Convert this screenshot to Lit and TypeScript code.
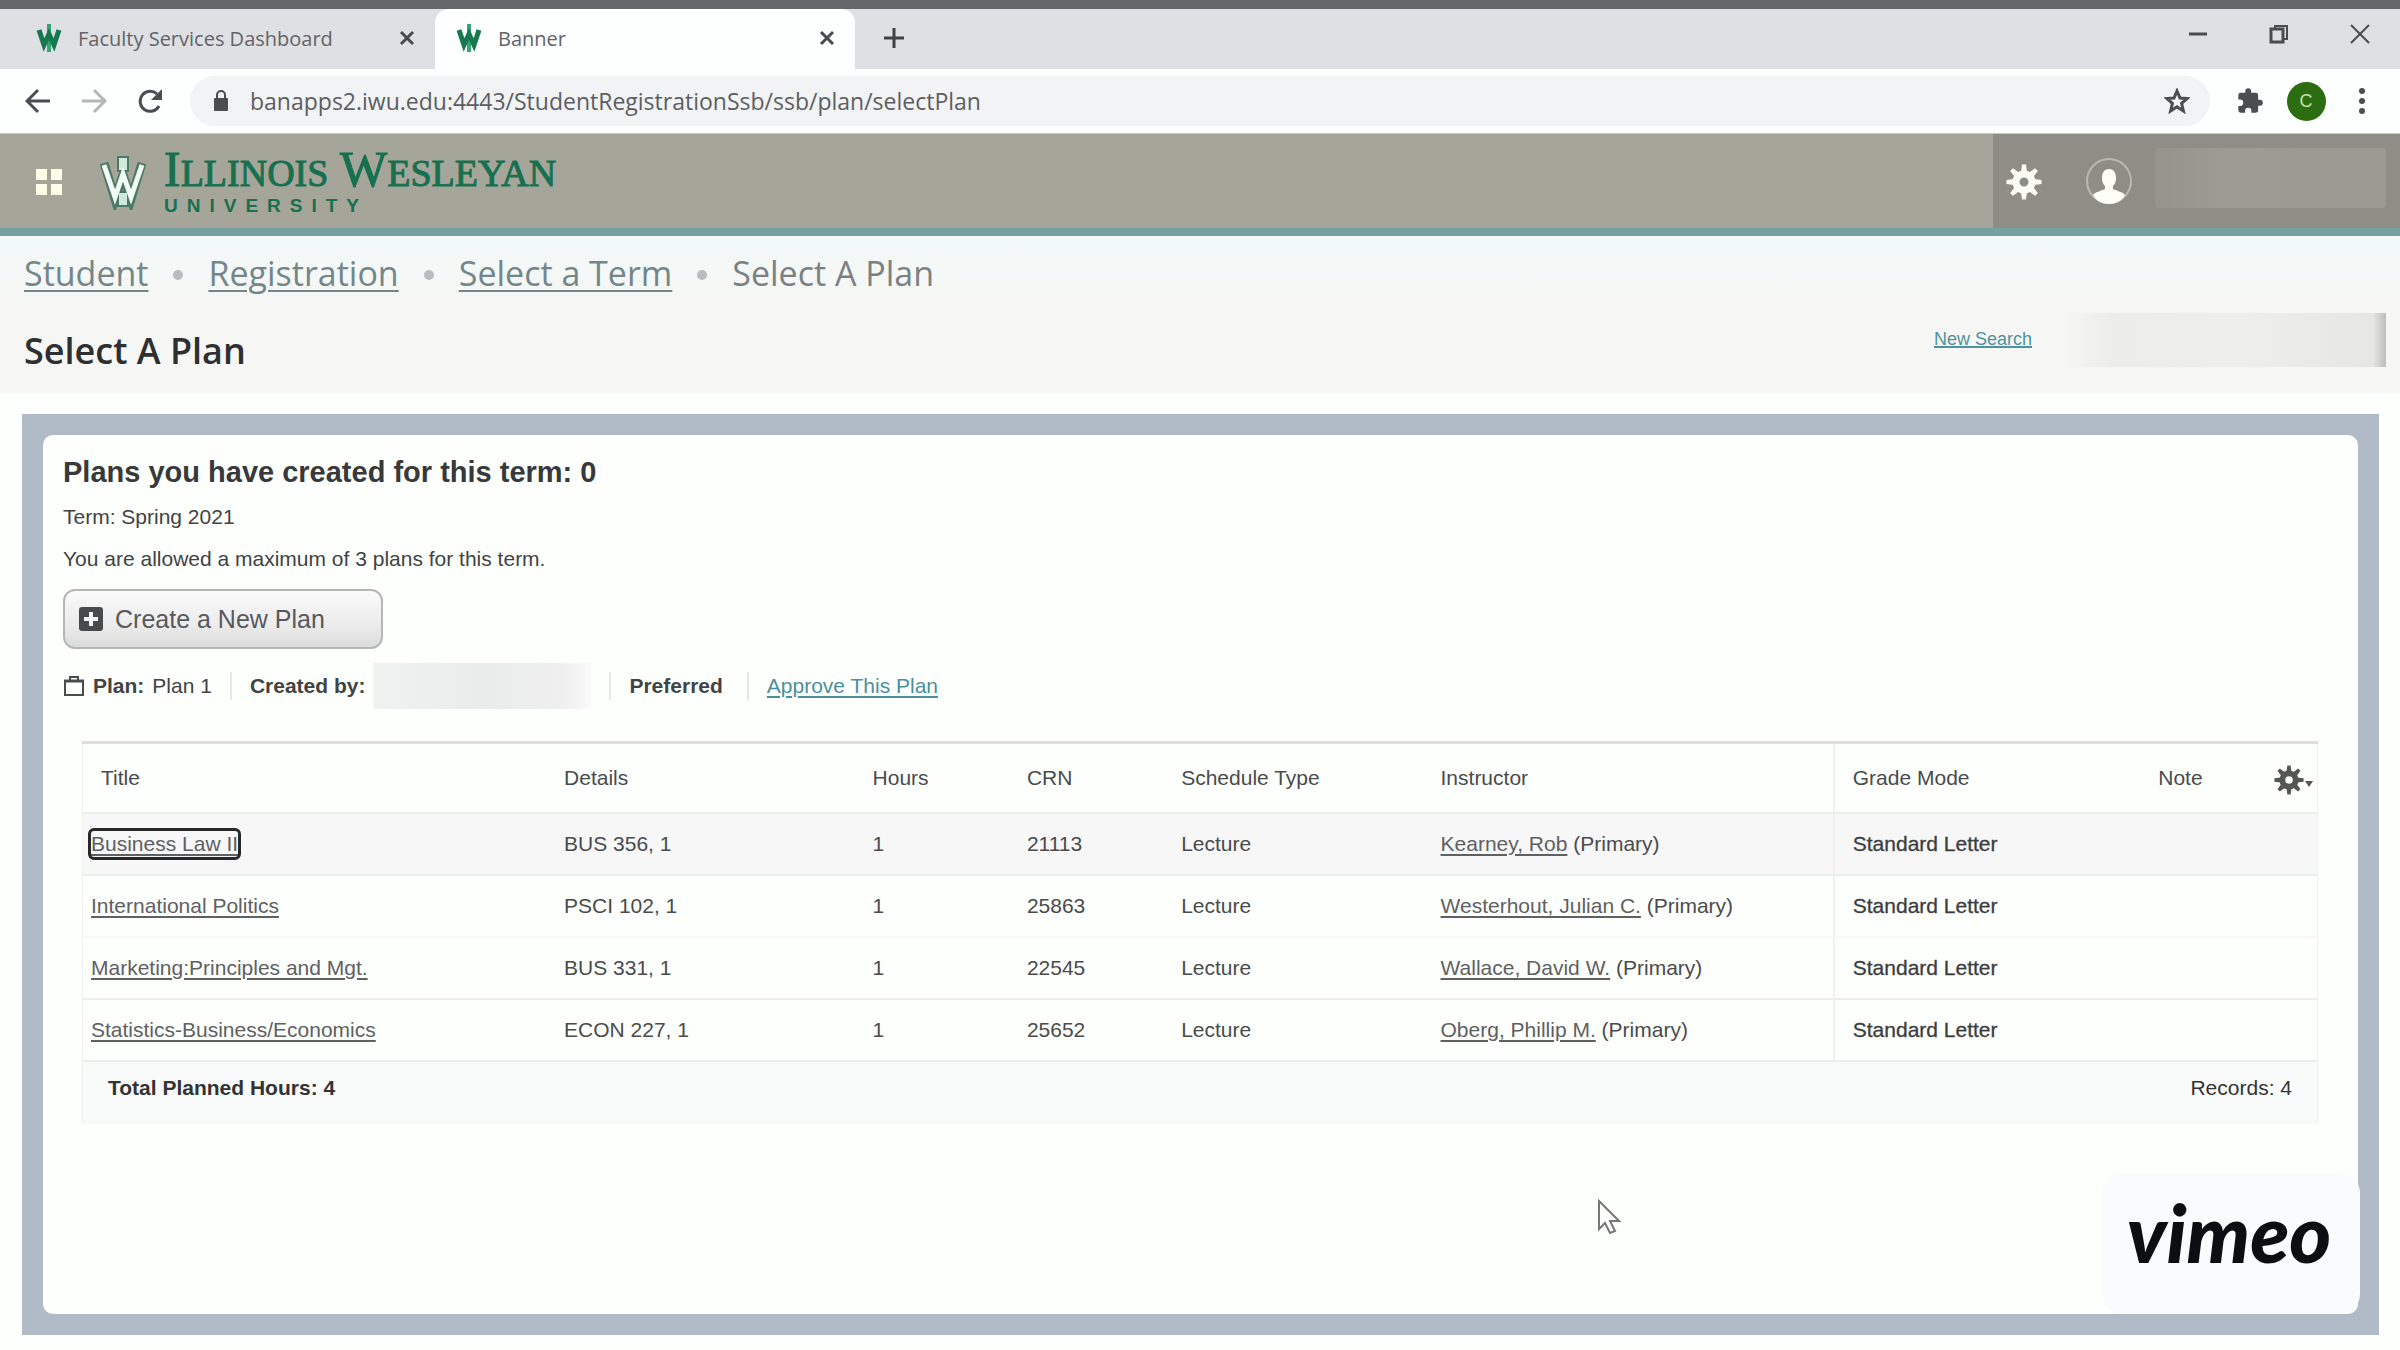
import { LitElement, html, css, svg } from "lit";
import { customElement, property } from "lit/decorators.js";

interface Course {
  title: string;
  details: string;
  hours: number;
  crn: string;
  type: string;
  instructor: string;
  grade: string;
}

const COURSES: Course[] = [
  { title: "Business Law II", details: "BUS 356, 1", hours: 1, crn: "21113", type: "Lecture", instructor: "Kearney, Rob", grade: "Standard Letter" },
  { title: "International Politics", details: "PSCI 102, 1", hours: 1, crn: "25863", type: "Lecture", instructor: "Westerhout, Julian C.", grade: "Standard Letter" },
  { title: "Marketing:Principles and Mgt.", details: "BUS 331, 1", hours: 1, crn: "22545", type: "Lecture", instructor: "Wallace, David W.", grade: "Standard Letter" },
  { title: "Statistics-Business/Economics", details: "ECON 227, 1", hours: 1, crn: "25652", type: "Lecture", instructor: "Oberg, Phillip M.", grade: "Standard Letter" },
];

const TEETH = [0, 45, 90, 135, 180, 225, 270, 315];

const gear = (size: number) => html`<svg width=${size} height=${size} viewBox="0 0 36 36" aria-hidden="true">
  <circle cx="18" cy="18" r="8" fill="none" stroke="currentColor" stroke-width="7" />
  ${TEETH.map((a) => svg`<path d="M15 8 16 0.5h4L21 8z" fill="currentColor" transform="rotate(${a} 18 18)" />`)}
</svg>`;

const favicon = html`<svg width="26" height="30" viewBox="0 0 26 30" aria-hidden="true">
  <path d="M13 1v28" stroke="#35a573" stroke-width="4" />
  <path d="M3 7 8 22 13 11 18 22 23 7" fill="none" stroke="#15784f" stroke-width="5" />
</svg>`;

const closeIcon = html`<svg width="16" height="16" viewBox="0 0 16 16" aria-hidden="true">
  <path d="M2 2 14 14M14 2 2 14" stroke="currentColor" stroke-width="3" />
</svg>`;

@customElement("browser-bar")
export class BrowserBar extends LitElement {
  static styles = css`
    :host { display: block; font-family: "Open Sans", "Noto Sans", sans-serif; color: #4b4d50; }
    button { display: grid; place-items: center; border: 0; padding: 0; background: none; color: inherit; font: inherit; }
    .strip { height: 60px; display: flex; align-items: stretch; background: #dfe0e3; border-top: 9px solid #666769; }
    .tab { display: flex; align-items: center; gap: 16px; padding: 0 20px 2px 36px; box-sizing: border-box; font-size: 20px; color: #626467; }
    .tab.first { width: 435px; }
    .tab.active { width: 420px; padding-left: 21px; background: #fdfefe; border-radius: 14px 14px 0 0; }
    .label { flex: 1; white-space: nowrap; }
    .tab svg { display: block; }
    .close { color: #4a4b4d; }
    .plus { width: 78px; color: #3f4143; padding-bottom: 2px; }
    .window { margin-left: auto; display: flex; padding-bottom: 10px; }
    .window button { width: 81px; color: #4a4b4d; }
    .tools { height: 64px; display: flex; align-items: center; background: #fdfffe; border-bottom: 1px solid #c9cac9; }
    .nav { width: 56px; height: 48px; }
    .nav:first-child { margin-left: 10px; }
    .muted { color: #b5b6b7; }
    .address { flex: 1; height: 50px; margin-left: 12px; padding: 0 20px 0 22px; box-sizing: border-box; display: flex; align-items: center; gap: 20px; border-radius: 25px; background: #f2f3f5; }
    .address input { flex: 1; min-width: 0; border: 0; padding: 0; outline: 0; background: none; font: 23px "Open Sans", sans-serif; color: #5c5e62; }
    .extra { display: flex; align-items: center; padding: 0 10px 0 12px; }
    .extra button { width: 56px; height: 40px; }
    .avatar { width: 39px; height: 39px; border-radius: 50%; background: #2c6d12; color: #bfe3ae; display: grid; place-items: center; font: 18px "Liberation Sans", sans-serif; }
  `;
  render() {
    return html`
      <div class="strip">
        <div class="tab first">${favicon}<span class="label">Faculty Services Dashboard</span><button class="close" aria-label="Close tab">${closeIcon}</button></div>
        <div class="tab active">${favicon}<span class="label">Banner</span><button class="close" aria-label="Close tab">${closeIcon}</button></div>
        <button class="plus" aria-label="New tab"><svg width="22" height="22" viewBox="0 0 22 22"><path d="M11 1v20M1 11h20" stroke="currentColor" stroke-width="3" /></svg></button>
        <div class="window">
          <button aria-label="Minimize"><svg width="20" height="20" viewBox="0 0 20 20"><path d="M1 10h18" stroke="currentColor" stroke-width="3" /></svg></button>
          <button aria-label="Restore"><svg width="20" height="20" viewBox="0 0 20 20" fill="none" stroke="currentColor" stroke-width="3"><rect x="2" y="5" width="12" height="13" /><path d="M6 5V2h12v13h-4" stroke-width="2" /></svg></button>
          <button aria-label="Close"><svg width="20" height="20" viewBox="0 0 20 20"><path d="M1 1 19 19M19 1 1 19" stroke="currentColor" stroke-width="2" /></svg></button>
        </div>
      </div>
      <div class="tools">
        <button class="nav" aria-label="Back"><svg width="26" height="26" viewBox="0 0 26 26" fill="none" stroke="currentColor" stroke-width="3"><path d="M25 13H3M13 2 2 13l11 11" /></svg></button>
        <button class="nav muted" aria-label="Forward"><svg width="26" height="26" viewBox="0 0 26 26" fill="none" stroke="currentColor" stroke-width="3"><path d="M1 13h22M13 2l11 11-11 11" /></svg></button>
        <button class="nav" aria-label="Reload"><svg width="26" height="26" viewBox="0 0 26 26"><path d="M22 18A10 10 0 1 1 20 6" fill="none" stroke="currentColor" stroke-width="3" /><path d="M25 1v11H14z" fill="currentColor" /></svg></button>
        <label class="address">
          <svg width="18" height="22" viewBox="0 0 18 22"><rect x="2" y="8" width="14" height="13" rx="1" fill="#4b4d50" /><path d="M5 9V5a4 4 0 0 1 8 0v4" fill="none" stroke="#4b4d50" stroke-width="2" /></svg>
          <input aria-label="Address" value="banapps2.iwu.edu:4443/StudentRegistrationSsb/ssb/plan/selectPlan" />
          <svg width="26" height="26" viewBox="0 0 26 26"><path d="m13 3 3 7 7 .6-5.400 4.800L19.400 23 13 18.800 6.600 23l1.800-7.600L3 10.600 10 10z" fill="none" stroke="currentColor" stroke-width="3" /></svg>
        </label>
        <div class="extra">
          <button aria-label="Extensions"><svg width="28" height="28" viewBox="0 0 24 24"><path fill="currentColor" d="M20.500 11H19V7a2 2 0 0 0-2-2h-4V3.500a2.500 2.500 0 0 0-5 0V5H4a2 2 0 0 0-2 2v3.800h1.500a2.700 2.700 0 0 1 0 5.400H2V20a2 2 0 0 0 2 2h3.800v-1.500a2.700 2.700 0 0 1 5.400 0V22H17a2 2 0 0 0 2-2v-4h1.500a2.500 2.500 0 0 0 0-5z" /></svg></button>
          <button aria-label="Profile"><span class="avatar">C</span></button>
          <button aria-label="Menu"><svg width="8" height="28" viewBox="0 0 8 28" fill="currentColor"><circle cx="4" cy="4" r="3" /><circle cx="4" cy="14" r="3" /><circle cx="4" cy="24" r="3" /></svg></button>
        </div>
      </div>`;
  }
}

@customElement("site-header")
export class SiteHeader extends LitElement {
  static styles = css`
    :host { display: block; }
    .bar { height: 94px; display: flex; align-items: stretch; justify-content: space-between; background: #a6a59a; border-bottom: 8px solid #76a1a3; color: #fdfef8; }
    button { display: grid; place-items: center; border: 0; padding: 0; background: none; color: inherit; }
    .brand { display: flex; align-items: center; padding: 2px 0 0 35px; gap: 37px; }
    .logo { display: flex; align-items: center; gap: 18px; color: #17704f; text-decoration: none; }
    .words { display: grid; gap: 2px; }
    .name { font: 50px/42px "Liberation Serif", serif; white-space: nowrap; -webkit-text-stroke: 1px #17704f; }
    .small { font-size: 38px; }
    .sub { font: bold 19px/20px "Liberation Sans", sans-serif; letter-spacing: 9px; }
    .user { display: flex; align-items: center; width: 407px; box-sizing: border-box; padding: 2px 14px 0 9px; background: #8e8d86; }
    .cog { width: 44px; }
    .person { width: 50px; margin: 0 21px 0 38px; }
    .redacted { flex: 1; height: 60px; margin-bottom: 8px; border-radius: 4px; background: linear-gradient(90deg, #94938c, #9d9c94 30%, #9c9b93); }
  `;
  render() {
    return html`<header class="bar">
      <div class="brand">
        <button aria-label="Applications"><svg width="28" height="28" viewBox="0 0 28 28" fill="#fdfde8"><path d="M1 1h11v11H1zM16 1h11v11H16zM1 16h11v11H1zM16 16h11v11H16z" /></svg></button>
        <a class="logo" href="#home">
          <svg width="46" height="56" viewBox="0 0 46 56" fill="none" aria-hidden="true">
            <path d="M23 2v16M23 37v16" stroke="#4d7a66" stroke-width="12" />
            <path d="M4 9 15 45 23 21 31 45 42 9" stroke="#4d7a66" stroke-width="9" />
            <path d="M23 4v12M23 39v12" stroke="#cfe9dc" stroke-width="8" />
            <path d="M4 11 15 43 23 20 31 43 42 11" stroke="#f2fbf5" stroke-width="5" />
          </svg>
          <span class="words"><span class="name">I<span class="small">LLINOIS</span> W<span class="small">ESLEYAN</span></span><span class="sub">UNIVERSITY</span></span>
        </a>
      </div>
      <div class="user">
        <button class="cog" aria-label="Settings">${gear(36)}</button>
        <button class="person" aria-label="User"><svg width="48" height="48" viewBox="0 0 48 48"><circle cx="24" cy="23" r="22" fill="none" stroke="#b9b9b1" stroke-width="2" /><path d="M24 11c-5 0-7 4-7 9 0 4 1 6 3 8v3c-4 2-10 3-12 6 3 6 9 9 16 9s13-3 16-9c-2-3-8-4-12-6v-3c2-2 3-4 3-8 0-5-2-9-7-9z" fill="currentColor" /></svg></button>
        <div class="redacted"></div>
      </div>
    </header>`;
  }
}

@customElement("page-heading")
export class PageHeading extends LitElement {
  static styles = css`
    :host { display: block; height: 157px; box-sizing: border-box; padding: 13px 14px 0 24px; background: linear-gradient(#f2f9f8, #f6f7f5 40%, #f6f7f5); font-family: "Open Sans", "Noto Sans", sans-serif; }
    .crumbs { display: flex; align-items: center; font-size: 34px; line-height: 48px; color: #7b8183; }
    .crumbs a { color: #73868a; text-underline-offset: 4px; text-decoration-thickness: 2px; }
    .dot { width: 10px; height: 10px; margin: 4px 25px 0; border-radius: 50%; background: #b9bdbe; }
    .row { display: flex; align-items: center; justify-content: space-between; margin-top: 15px; height: 56px; }
    h1 { margin: 0; font-size: 36px; line-height: 56px; font-weight: 600; color: #2d2f30; padding-top: 22px; }
    .search { display: flex; align-items: center; gap: 30px; }
    .search a { font: 18px "Liberation Sans", sans-serif; color: #4f929d; text-decoration-thickness: 2px; padding-bottom: 2px; }
    .redacted { width: 324px; height: 54px; background: linear-gradient(90deg, #f6f7f500, #ececea 16%, #eeeeec 55%, #e6e7e4 96%, #bcbebc); }
  `;
  render() {
    return html`
      <nav class="crumbs" aria-label="Breadcrumb">
        <a href="#student">Student</a><span class="dot"></span><a href="#registration">Registration</a><span class="dot"></span><a href="#term">Select a Term</a><span class="dot"></span><span>Select A Plan</span>
      </nav>
      <div class="row">
        <h1>Select A Plan</h1>
        <div class="search"><a href="#search">New Search</a><div class="redacted"></div></div>
      </div>`;
  }
}

@customElement("plan-table")
export class PlanTable extends LitElement {
  @property({ attribute: false }) courses: Course[] = [];
  static styles = css`
    :host { display: block; }
    table { width: 100%; table-layout: fixed; border-collapse: separate; border-spacing: 0; border-top: 3px solid #dcdedc; font-size: 21px; line-height: 24px; color: #4a4b4c; }
    th, td { padding: 0 8px; text-align: left; font-weight: normal; white-space: nowrap; box-sizing: border-box; border-bottom: 2px solid #ebedec; }
    th { height: 70px; }
    td { height: 62px; }
    th:first-child { padding-left: 18px; }
    th:first-child, td:first-child { border-left: 1px solid #f0f1ef; }
    th:last-child, td:last-child { border-right: 1px solid #f0f1ef; }
    th.mode, td.mode { padding-left: 18px; border-left: 2px solid #efefef; }
    td.mode { color: #3c3d3f; -webkit-text-stroke: 0.3px; }
    .c-title { width: 21.2%; }
    .c-details { width: 13.8%; }
    .c-hours { width: 6.9%; }
    .c-crn { width: 6.9%; }
    .c-type { width: 11.6%; }
    .c-instructor { width: 17.9%; }
    .c-mode { width: 14.2%; }
    .c-note { width: 4.9%; }
    .chosen td { background: #f6f7f6; }
    tbody tr:nth-child(2) td { border-bottom-color: #f7f8f7; }
    a { color: #5f6062; text-decoration-thickness: 2px; text-underline-offset: 3px; }
    .chosen a.title { display: inline-block; outline: 3px solid #26282a; border-radius: 3px; line-height: 26px; }
    .tools { padding: 0; text-align: right; }
    .tools button { display: flex; align-items: center; margin-left: auto; padding: 4px 4px 0 0; border: 0; background: none; color: #555755; gap: 1px; }
    .tools button svg:last-child { margin-top: 8px; }
    tfoot td { height: 62px; padding: 0 25px 10px; border: 0; background: #f9fafa; color: #333; }
    .total { font-weight: bold; }
    .records { text-align: right; }
  `;
  render() {
    return html`<table>
      <colgroup><col class="c-title" /><col class="c-details" /><col class="c-hours" /><col class="c-crn" /><col class="c-type" /><col class="c-instructor" /><col class="c-mode" /><col class="c-note" /><col /></colgroup>
      <thead><tr><th>Title</th><th>Details</th><th>Hours</th><th>CRN</th><th>Schedule Type</th><th>Instructor</th><th class="mode">Grade Mode</th><th>Note</th>
        <th class="tools"><button aria-label="Table settings">${gear(30)}<svg width="8" height="6" viewBox="0 0 8 6"><path d="M0 0h8L4 6z" fill="currentColor" /></svg></button></th></tr></thead>
      <tbody>${this.courses.map((c, i) => html`<tr class=${i === 0 ? "chosen" : ""}>
        <td><a class="title" href="#course">${c.title}</a></td><td>${c.details}</td><td>${c.hours}</td><td>${c.crn}</td><td>${c.type}</td>
        <td><a href="#instructor">${c.instructor}</a> (Primary)</td><td class="mode">${c.grade}</td><td></td><td></td></tr>`)}</tbody>
      <tfoot><tr><td class="total" colspan="5">Total Planned Hours: ${this.courses.reduce((n, c) => n + c.hours, 0)}</td><td class="records" colspan="4">Records: ${this.courses.length}</td></tr></tfoot>
    </table>`;
  }
}

@customElement("app-root")
export class AppRoot extends LitElement {
  static styles = css`
    :host { display: flex; flex-direction: column; min-height: 100vh; background: #fdfffd; font-family: "Liberation Sans", Arial, sans-serif; }
    .frame { flex: 1; display: flex; margin: 21px 21px 15px 22px; padding: 21px; background: #b1bac7; }
    .panel { flex: 1; position: relative; padding: 20px 40px 20px 20px; border-radius: 10px; background: #fdfffd; color: #414344; }
    h2 { margin: 0; font-size: 29px; line-height: 34px; color: #37393a; }
    p { margin: 0; font-size: 21px; line-height: 42px; }
    p:first-of-type { margin-top: 7px; }
    .create { display: flex; align-items: center; gap: 12px; width: 320px; height: 60px; margin-top: 9px; padding: 0 14px; border: 2px solid #b5b6b6; border-radius: 12px; background: linear-gradient(#fafafa, #ececec 60%, #dadbda); font: 25px "Liberation Sans", sans-serif; color: #58595b; }
    .meta { display: flex; align-items: center; height: 48px; margin-top: 13px; font-size: 21px; white-space: nowrap; }
    .meta .bag { margin-right: 8px; }
    .item { padding: 0 18px; border-left: 2px solid #e6e8e6; line-height: 28px; }
    .item:first-of-type { padding-left: 0; border: 0; }
    .item:last-child { margin-left: 6px; }
    .item.plan { display: flex; gap: 8px; }
    .meta a { color: #4d8f9c; text-decoration-thickness: 2px; text-underline-offset: 3px; }
    .who { display: flex; align-items: center; gap: 8px; }
    .redacted { width: 218px; height: 46px; margin: -10px 0; background: linear-gradient(90deg, #f0f1f1, #eaebeb 50%, #efefef 88%, #f9faf9); }
    plan-table { margin: 31px 0 0 19px; }
    .pointer { position: absolute; left: 1554px; bottom: 79px; }
    .badge { position: absolute; right: -2px; bottom: 0; width: 258px; height: 141px; display: grid; place-items: center; box-sizing: border-box; padding: 0 4px 24px 0; border-radius: 20px; background: #fafbfc; font: italic 900 80px/90px Lato, sans-serif; color: #0b0f12; }
  `;
  render() {
    return html`
      <browser-bar></browser-bar>
      <site-header></site-header>
      <page-heading></page-heading>
      <main class="frame"><section class="panel">
        <h2>Plans you have created for this term: 0</h2>
        <p>Term: Spring 2021</p>
        <p>You are allowed a maximum of 3 plans for this term.</p>
        <button class="create"><svg width="24" height="24" viewBox="0 0 24 24"><rect width="24" height="24" rx="3" fill="#484a4b" /><path d="M12 5v14M5 12h14" stroke="#f6f6f6" stroke-width="4" /></svg>Create a New Plan</button>
        <div class="meta">
          <svg class="bag" width="22" height="22" viewBox="0 0 22 22" fill="none" stroke="#4a4c4d"><rect x="2" y="6" width="18" height="14" stroke-width="2" /><path d="M1 6h20" stroke-width="3" /><path d="M7 6V2h8v4" stroke-width="2" /></svg>
          <span class="item plan"><b>Plan:</b><span>Plan 1</span></span>
          <span class="item who"><b>Created by:</b><span class="redacted"></span></span>
          <span class="item"><b>Preferred</b></span>
          <span class="item"><a href="#approve">Approve This Plan</a></span>
        </div>
        <plan-table .courses=${COURSES}></plan-table>
        <svg class="pointer" width="24" height="36" viewBox="0 0 24 36"><path d="M2 2v28l6-6 5 10 5-2-5-10h9z" fill="#fdfefd" stroke="#777" stroke-width="2" /></svg>
        <div class="badge">vimeo</div>
      </section></main>`;
  }
}
